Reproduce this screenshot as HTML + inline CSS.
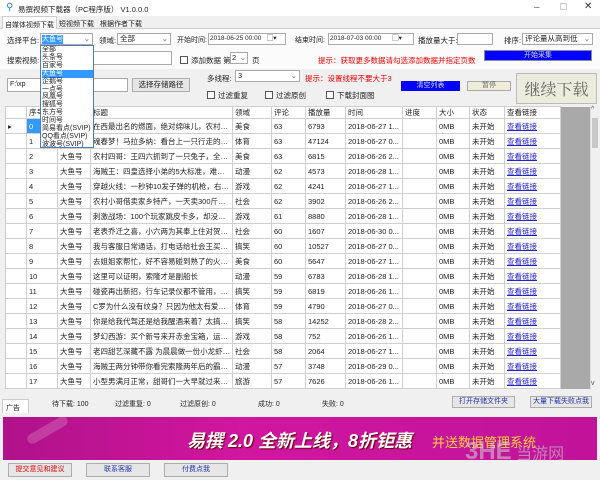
<!DOCTYPE html>
<html><head><meta charset="utf-8"><style>
*{margin:0;padding:0;box-sizing:border-box}
body{width:600px;height:480px;overflow:hidden;background:#f0f0f0;font-family:"Liberation Sans","Noto Sans CJK SC",sans-serif;font-size:7.5px;color:#222;position:relative}
.a{position:absolute;white-space:nowrap}
.box{position:absolute;background:#fff;border:1px solid #a9a9a9;font-size:7.5px;line-height:10px}
.btn{position:absolute;border:1px solid #adadad;background:#e6e6e6;text-align:center;font-size:8px}
.cb{display:inline-block;width:8px;height:8px;border:1px solid #555;background:#fff;vertical-align:-1px;margin-right:3px}
.red{color:#e00}
table{border-collapse:collapse;table-layout:fixed;position:absolute;left:5px;top:106px;width:585px}
td{border:1px solid #cfcfcf;height:15px;font-size:7.5px;padding-left:2px;overflow:hidden;white-space:nowrap;background:#fff;text-overflow:ellipsis}
tr.h td{background:#fff;height:11px;font-size:7.5px}
a{color:#2222cc;text-decoration:underline}
</style></head><body>
<div class="a" style="left:0;top:0;width:600px;height:16px;background:#fff"></div>
<div class="a" style="left:6px;top:2px;color:#2a7fd4;font-size:10px">&#9906;</div>
<div class="a" style="left:18px;top:4px;font-size:7.5px">易撰视频下载器（PC程序版） V1.0.0.0</div>
<div class="a" style="left:534px;top:2px;font-size:10px;color:#555">–</div>
<div class="a" style="left:560px;top:3px;width:7px;height:7px;border:1px solid #ccc"></div>
<div class="a" style="left:584px;top:1px;font-size:10px;color:#333">✕</div>
<div class="a" style="left:0;top:16px;width:600px;height:13px;background:#f0f0f0;border-bottom:1px solid #ccc"></div>
<div class="a" style="left:2px;top:16px;width:55px;height:14px;background:#fff;border:1px solid #ccc;border-bottom:none;font-size:7px;padding:3px 0 0 2px">自媒体视频下载</div>
<div class="a" style="left:59px;top:19px;font-size:7px">短视频下载</div>
<div class="a" style="left:100px;top:19px;font-size:7px">根据作者下载</div>
<div class="a" style="left:0;top:29px;width:600px;height:40px;background:#fbfbfb"></div>
<div class="a" style="left:0;top:69px;width:600px;height:36px;background:#f0f0f0"></div>
<div class="a" style="left:7px;top:35px">选择平台:</div>
<div class="box" style="left:40px;top:33px;width:53px;height:12px"><span style="background:#3399ff;color:#fff;margin-left:1px;display:inline-block;font-size:7px;line-height:9px">大鱼号</span><span style="position:absolute;right:2px;top:0;color:#666">⌄</span></div>
<div class="a" style="left:99px;top:35px">领域:</div>
<div class="box" style="left:117px;top:33px;width:54px;height:12px;padding-left:2px">全部<span style="position:absolute;right:2px;top:0;color:#666">⌄</span></div>
<div class="a" style="left:177px;top:35px;font-size:7px">开始时间:</div>
<div class="box" style="left:208px;top:33px;width:78px;height:12px;font-size:6.5px;padding-left:1px">2018-06-25 00:00 &nbsp;&nbsp;▢▾</div>
<div class="a" style="left:295px;top:35px;font-size:7px">结束时间:</div>
<div class="box" style="left:328px;top:33px;width:86px;height:12px;font-size:6.5px;padding-left:1px">2018-07-03 00:00 &nbsp;&nbsp;&nbsp;&nbsp;&nbsp;▢▾</div>
<div class="a" style="left:418px;top:35px">播放量大于:</div>
<div class="box" style="left:457px;top:33px;width:36px;height:12px"></div>
<div class="a" style="left:504px;top:35px">排序:</div>
<div class="box" style="left:522px;top:33px;width:71px;height:12px;padding-left:2px">评论量从高到低<span style="position:absolute;right:2px;top:0;color:#666">⌄</span></div>
<div class="a" style="left:7px;top:55px">搜索视频:</div>
<div class="box" style="left:40px;top:51px;width:132px;height:14px"></div>
<div class="a" style="left:180px;top:55px"><span class="cb"></span>添加数据 第</div>
<div class="box" style="left:230px;top:52px;width:18px;height:12px;padding-left:1px">2<span style="position:absolute;right:1px;color:#666">⌄</span></div>
<div class="a" style="left:252px;top:55px">页</div>
<div class="a red" style="left:318px;top:55px">提示：获取更多数据请勾选添加数据并指定页数</div>
<div class="a" style="left:484px;top:50px;width:108px;height:11px;background:#0000ff;border:1px solid #88a;color:#ddd;text-align:center;font-size:7px;line-height:9px">开始采集</div>
<div class="box" style="left:7px;top:78px;width:121px;height:14px;font-size:7px;padding:1px 2px">F:\xp</div>
<div class="btn" style="left:132px;top:78px;width:58px;height:14px;line-height:12px;font-size:7.5px">选择存储路径</div>
<div class="a" style="left:207px;top:73px">多线程:</div>
<div class="box" style="left:235px;top:70px;width:65px;height:12px;padding-left:2px">3<span style="position:absolute;right:2px;color:#666">⌄</span></div>
<div class="a red" style="left:305px;top:73px">提示：设置线程不要大于3</div>
<div class="a" style="left:207px;top:90px"><span class="cb"></span>过滤重复</div>
<div class="a" style="left:265px;top:90px"><span class="cb"></span>过滤原创</div>
<div class="a" style="left:326px;top:90px"><span class="cb"></span>下载封面图</div>
<div class="a" style="left:401px;top:81px;width:59px;height:10px;background:#0000ff;color:#ddd;text-align:center;font-size:7px;line-height:10px">清空列表</div>
<div class="a" style="left:467px;top:81px;width:44px;height:10px;background:#eeeed8;border:1px solid #aaa;color:#666;text-align:center;font-size:7px;line-height:8px">暂停</div>
<div class="a" style="left:516px;top:73px;width:81px;height:31px;background:#ececdc;border:1px solid #bbb;color:#666;text-align:center;font-size:16px;line-height:29px;font-family:'Noto Serif CJK SC',serif">继续下载</div>

<table>
<colgroup><col style="width:21px"><col style="width:31px"><col style="width:33px"><col style="width:142px"><col style="width:39px"><col style="width:34px"><col style="width:40px"><col style="width:57px"><col style="width:34px"><col style="width:33px"><col style="width:35px"><col style="width:56px"><col style="width:30px"></colgroup>
<tr class="h"><td></td><td>序号</td><td>来源</td><td>标题</td><td>领域</td><td>评论</td><td>播放量</td><td>时间</td><td>进度</td><td>大小</td><td>状态</td><td>查看链接</td><td style="background:#a9a9a9;border:none"></td></tr>
<tr><td>▸</td><td style="background:#3399ff;color:#fff">0</td><td>大鱼号</td><td>在西最出名的燃面，绝对绵味儿，农村小...</td><td>美食</td><td>63</td><td>6793</td><td>2018-06-27 1...</td><td></td><td>0MB</td><td>未开始</td><td><a>查看链接</a></td><td style="background:#a9a9a9;border:none"></td></tr>
<tr><td></td><td>1</td><td>大鱼号</td><td>魂春梦！马拉多纳：看台上一只行走的表情包</td><td>体育</td><td>63</td><td>47124</td><td>2018-06-27 0...</td><td></td><td>0MB</td><td>未开始</td><td><a>查看链接</a></td><td style="background:#a9a9a9;border:none"></td></tr>
<tr><td></td><td>2</td><td>大鱼号</td><td>农村四哥：王四六抓到了一只兔子，全家...</td><td>美食</td><td>63</td><td>6815</td><td>2018-06-26 2...</td><td></td><td>0MB</td><td>未开始</td><td><a>查看链接</a></td><td style="background:#a9a9a9;border:none"></td></tr>
<tr><td></td><td>3</td><td>大鱼号</td><td>海贼王：四皇选择小弟的5大标准，难怪红...</td><td>动漫</td><td>62</td><td>4573</td><td>2018-06-28 1...</td><td></td><td>0MB</td><td>未开始</td><td><a>查看链接</a></td><td style="background:#a9a9a9;border:none"></td></tr>
<tr><td></td><td>4</td><td>大鱼号</td><td>穿越火线：一秒钟10发子弹的机枪，右键...</td><td>游戏</td><td>62</td><td>4241</td><td>2018-06-27 1...</td><td></td><td>0MB</td><td>未开始</td><td><a>查看链接</a></td><td style="background:#a9a9a9;border:none"></td></tr>
<tr><td></td><td>5</td><td>大鱼号</td><td>农村小哥借卖家乡特产，一天卖300斤，吃...</td><td>社会</td><td>62</td><td>3902</td><td>2018-06-26 2...</td><td></td><td>0MB</td><td>未开始</td><td><a>查看链接</a></td><td style="background:#a9a9a9;border:none"></td></tr>
<tr><td></td><td>6</td><td>大鱼号</td><td>刺激战场：100个玩家跳皮卡多，却没人去...</td><td>游戏</td><td>61</td><td>8880</td><td>2018-06-28 1...</td><td></td><td>0MB</td><td>未开始</td><td><a>查看链接</a></td><td style="background:#a9a9a9;border:none"></td></tr>
<tr><td></td><td>7</td><td>大鱼号</td><td>老表乔迁之喜，小六两为其奉上住对贺额...</td><td>社会</td><td>60</td><td>1607</td><td>2018-06-30 0...</td><td></td><td>0MB</td><td>未开始</td><td><a>查看链接</a></td><td style="background:#a9a9a9;border:none"></td></tr>
<tr><td></td><td>8</td><td>大鱼号</td><td>我与客服日常通话，打电话给社会王买枪...</td><td>搞笑</td><td>60</td><td>10527</td><td>2018-06-27 0...</td><td></td><td>0MB</td><td>未开始</td><td><a>查看链接</a></td><td style="background:#a9a9a9;border:none"></td></tr>
<tr><td></td><td>9</td><td>大鱼号</td><td>去姐姐家帮忙，好不容易碰到熟了的火龙...</td><td>美食</td><td>60</td><td>5647</td><td>2018-06-27 1...</td><td></td><td>0MB</td><td>未开始</td><td><a>查看链接</a></td><td style="background:#a9a9a9;border:none"></td></tr>
<tr><td></td><td>10</td><td>大鱼号</td><td>这里可以证明，索隆才是副船长</td><td>动漫</td><td>59</td><td>6783</td><td>2018-06-28 1...</td><td></td><td>0MB</td><td>未开始</td><td><a>查看链接</a></td><td style="background:#a9a9a9;border:none"></td></tr>
<tr><td></td><td>11</td><td>大鱼号</td><td>碰瓷再出新招，行车记录仪都不管用，让...</td><td>搞笑</td><td>59</td><td>6819</td><td>2018-06-26 1...</td><td></td><td>0MB</td><td>未开始</td><td><a>查看链接</a></td><td style="background:#a9a9a9;border:none"></td></tr>
<tr><td></td><td>12</td><td>大鱼号</td><td>C罗为什么没有纹身？只因为他太有爱心...</td><td>体育</td><td>59</td><td>4790</td><td>2018-06-27 0...</td><td></td><td>0MB</td><td>未开始</td><td><a>查看链接</a></td><td style="background:#a9a9a9;border:none"></td></tr>
<tr><td></td><td>13</td><td>大鱼号</td><td>你是给我代驾还是给我醒酒来着？太搞笑了</td><td>搞笑</td><td>58</td><td>14252</td><td>2018-06-28 2...</td><td></td><td>0MB</td><td>未开始</td><td><a>查看链接</a></td><td style="background:#a9a9a9;border:none"></td></tr>
<tr><td></td><td>14</td><td>大鱼号</td><td>梦幻西游：买个新号来开赤金宝箱，运气...</td><td>游戏</td><td>58</td><td>752</td><td>2018-06-26 1...</td><td></td><td>0MB</td><td>未开始</td><td><a>查看链接</a></td><td style="background:#a9a9a9;border:none"></td></tr>
<tr><td></td><td>15</td><td>大鱼号</td><td>老四甜艺深藏不露 为晨晨做一份小龙虾晨...</td><td>社会</td><td>58</td><td>2064</td><td>2018-06-27 1...</td><td></td><td>0MB</td><td>未开始</td><td><a>查看链接</a></td><td style="background:#a9a9a9;border:none"></td></tr>
<tr><td></td><td>16</td><td>大鱼号</td><td>海贼王两分钟带你看完索隆两年后的霸气瞬间</td><td>动漫</td><td>57</td><td>3748</td><td>2018-06-29 0...</td><td></td><td>0MB</td><td>未开始</td><td><a>查看链接</a></td><td style="background:#a9a9a9;border:none"></td></tr>
<tr><td></td><td>17</td><td>大鱼号</td><td>小型男满月正常，甜哥们一大早就过来看...</td><td>旅游</td><td>57</td><td>7626</td><td>2018-06-26 1...</td><td></td><td>0MB</td><td>未开始</td><td><a>查看链接</a></td><td style="background:#a9a9a9;border:none"></td></tr>
</table>
<div class="a" style="left:590px;top:106px;width:9px;height:284px;background:#f0f0f0;border-left:1px solid #ddd"></div>
<div class="a" style="left:591px;top:106px;font-size:7px;color:#555">^</div>
<div class="a" style="left:592px;top:118px;width:6px;height:30px;background:#c8c8c8"></div>
<div class="a" style="left:591px;top:380px;font-size:7px;color:#555">v</div>

<div class="a" style="left:0;top:390px;width:600px;height:27px;background:#f0f0f0"></div>
<div class="a" style="left:2px;top:399px;width:27px;height:14px;background:#fff;border:1px solid #ccc;border-bottom:none;font-size:7px;padding:3px 0 0 3px">广告</div>
<div class="a" style="left:52px;top:399px;font-size:7px">待下载: 100</div>
<div class="a" style="left:115px;top:399px;font-size:7px">过滤重复: 0</div>
<div class="a" style="left:180px;top:399px;font-size:7px">过滤原创: 0</div>
<div class="a" style="left:258px;top:399px;font-size:7px">成功: 0</div>
<div class="a" style="left:322px;top:399px;font-size:7px">失败: 0</div>
<div class="btn" style="left:452px;top:396px;width:63px;height:12px;color:#2233aa;line-height:10px;font-size:7px">打开存储文件夹</div>
<div class="btn" style="left:530px;top:396px;width:62px;height:12px;color:#2233aa;line-height:10px;font-size:7px">大量下载失败点我</div>
<div class="a" style="left:3px;top:417px;width:594px;height:43px;background:linear-gradient(90deg,#b0128a,#d1169f 40%,#c0139a)"></div>
<div class="a" style="left:25px;top:425px;width:45px;height:10px;background:rgba(255,255,255,.18);transform:rotate(-30deg);border-radius:5px"></div>
<div class="a" style="left:187px;top:427px;font-size:18px;font-weight:bold;font-style:italic;color:#fff;text-shadow:1px 1px 1px #600">易撰 2.0 全新上线，8折钜惠</div>
<div class="a" style="left:432px;top:432px;font-size:13px;color:#ffd23a">并送数据管理系统</div>
<div class="a" style="left:465px;top:438px;font-size:24px;font-weight:bold;color:rgba(200,200,200,.6)">3HE<span style="font-size:16px;font-weight:normal"> 当游网</span></div>
<div class="btn" style="left:8px;top:463px;width:64px;height:14px;color:#d00;line-height:12px;font-size:7px">提交意见和建议</div>
<div class="btn" style="left:86px;top:463px;width:64px;height:14px;color:#2233aa;line-height:12px;font-size:7px">联系客服</div>
<div class="btn" style="left:164px;top:463px;width:64px;height:14px;color:#2233aa;line-height:12px;font-size:7px">付费点我</div>

<div class="a" style="left:40px;top:45px;width:54px;height:103px;background:#fff;border:1px solid #4a7cc4;font-size:7px;line-height:7.9px;padding-left:1px;overflow:hidden">
<div>全部</div><div>头条号</div><div>百家号</div><div style="background:#3399ff;color:#fff">大鱼号</div><div>企鹅号</div><div>一点号</div><div>凤凰号</div><div>搜狐号</div><div>东方号</div><div>时间号</div><div>简易看点(SVIP)</div><div>QQ看点(SVIP)</div><div>波波号(SVIP)</div></div>
</body></html>
